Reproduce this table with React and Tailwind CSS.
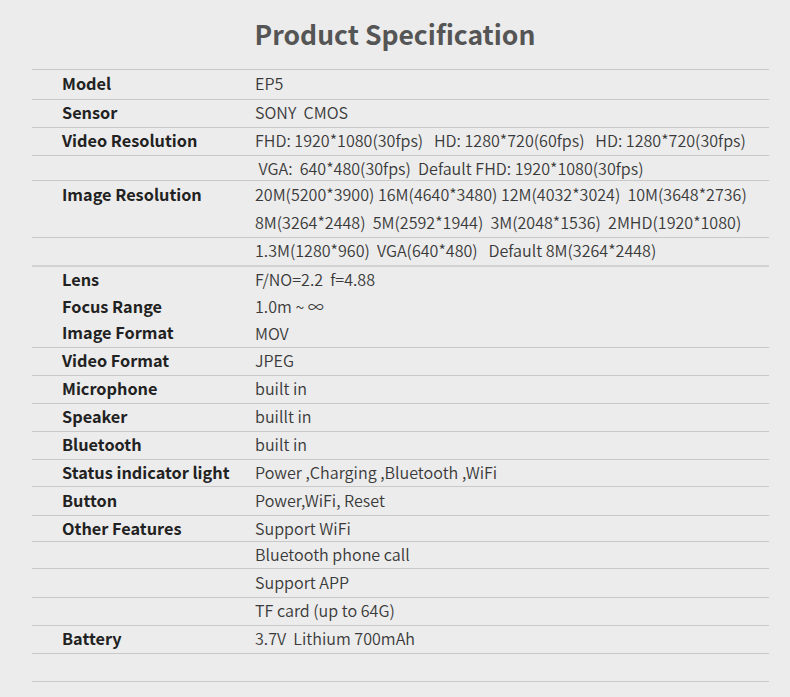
const groups = [
  { h: "h-[30px]", rows: [["Model", "EP5"]] },
  { h: "h-[28px]", rows: [["Sensor", "SONY  CMOS"]] },
  { h: "h-[28px]", rows: [["Video Resolution", "FHD: 1920*1080(30fps)   HD: 1280*720(60fps)   HD: 1280*720(30fps)"]] },
  { h: "h-[25px]", rows: [["", " VGA:  640*480(30fps)  Default FHD: 1920*1080(30fps)"]] },
  {
    h: "h-[57px]",
    rows: [
      ["Image Resolution", "20M(5200*3900) 16M(4640*3480) 12M(4032*3024)  10M(3648*2736)"],
      ["", "8M(3264*2448)  5M(2592*1944)  3M(2048*1536)  2MHD(1920*1080)"],
    ],
  },
  { h: "h-[29px]", rows: [["", "1.3M(1280*960)  VGA(640*480)   Default 8M(3264*2448)"]], thick: true },
  {
    h: "h-[81px]",
    rows: [
      ["Lens", "F/NO=2.2  f=4.88"],
      ["Focus Range", "1.0m ~ ∞"],
      ["Image Format", "MOV"],
    ],
  },
  { h: "h-[28px]", rows: [["Video Format", "JPEG"]] },
  { h: "h-[28px]", rows: [["Microphone", "built in"]] },
  { h: "h-[28px]", rows: [["Speaker", "buillt in"]] },
  { h: "h-[28px]", rows: [["Bluetooth", "built in"]] },
  { h: "h-[27px]", rows: [["Status indicator light", "Power ,Charging ,Bluetooth ,WiFi"]] },
  { h: "h-[29px]", rows: [["Button", "Power,WiFi, Reset"]] },
  { h: "h-[26px]", rows: [["Other Features", "Support WiFi"]] },
  { h: "h-[27px]", rows: [["", "Bluetooth phone call"]] },
  { h: "h-[29px]", rows: [["", "Support APP"]] },
  { h: "h-[28px]", rows: [["", "TF card (up to 64G)"]] },
  { h: "h-[28px]", rows: [["Battery", "3.7V  Lithium 700mAh"]] },
  { h: "h-[28px]", rows: [["", ""]] },
];

const SpecRow = ({ label, value }) => (
  <div className="flex flex-1 items-center pb-[2px]">
    <div className="w-[223px] shrink-0 whitespace-nowrap pl-[30px] text-[16.3px] font-bold text-[#222]">{label}</div>
    <div className="whitespace-pre text-[16.1px] font-[350] text-[#3a3a3a]">{value}</div>
  </div>
);

const App = () => {
  return (
    <div className="min-h-[697px] w-[790px] bg-[#ececec] font-['Noto_Sans_CJK_SC','Noto_Sans',sans-serif]">
      <div className="flex h-[69px] items-center justify-center pb-[2px]">
        <h1 className="text-[26.5px] font-bold text-[#555]">Product Specification</h1>
      </div>
      <div className="mx-[32px] w-[737px] border-t border-[#c9c9c9]">
        {groups.map((g, i) => (
          <div
            key={i}
            className={`flex flex-col ${g.h} ${
              g.thick ? "border-b-2 border-[#d2d2d2]" : "border-b border-[#c9c9c9]"
            }`}
          >
            {g.rows.map(([label, value], j) => (
              <SpecRow key={j} label={label} value={value} />
            ))}
          </div>
        ))}
      </div>
    </div>
  );
};

export default App;
